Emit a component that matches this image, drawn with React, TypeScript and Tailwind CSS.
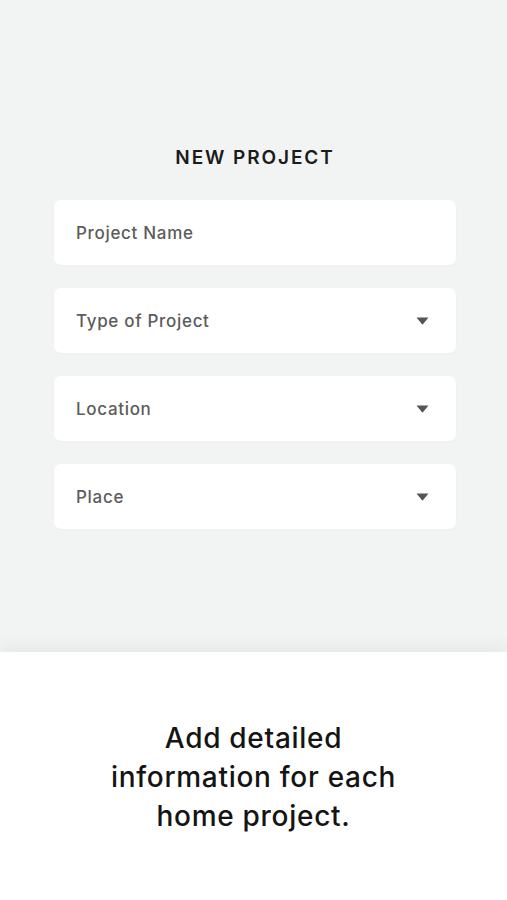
const fields = [
  { label: 'Project Name', select: false },
  { label: 'Type of Project', select: true },
  { label: 'Location', select: true },
  { label: 'Place', select: true },
];

const Caret = () => (
  <svg width="13" height="8" viewBox="0 0 13 8" className="text-[#555555]">
    <path d="M0.5 0.5 H12.5 L7.2 7 Q6.5 7.8 5.8 7 Z" fill="currentColor" />
  </svg>
);

const App = () => {
  return (
    <div
      className="w-full h-[900px] flex flex-col bg-white"
      style={{ fontFamily: 'Inter, "Noto Sans", sans-serif' }}
    >
      <div className="h-[652px] bg-[#f2f4f3] pt-[146px] pl-[54px] pr-[51px] flex flex-col shrink-0">
        <h1 className="text-center text-[19px] leading-[24px] font-semibold tracking-[0.1em] text-[#1b1b1b]">
          NEW PROJECT
        </h1>
        <div className="mt-[30px] flex flex-col gap-[23px]">
          {fields.map((f) => (
            <div
              key={f.label}
              className="h-[65px] bg-white rounded-[7px] flex items-center justify-between pl-[22px] pr-[27px] shadow-[0_1px_2px_rgba(0,0,0,0.03)]"
            >
              <span className="pt-[3px] text-[17px] font-medium text-[#5c5c5c] tracking-[0.04em]">
                {f.label}
              </span>
              {f.select && <Caret />}
            </div>
          ))}
        </div>
      </div>
      <div className="flex-1 bg-white shadow-[0_-8px_14px_rgba(0,0,0,0.045)]">
        <p className="pt-[67px] text-center text-[28px] leading-[39px] font-medium tracking-[0.025em] text-[#141414]">
          Add detailed
          <br />
          information for each
          <br />
          home project.
        </p>
      </div>
    </div>
  );
};

export default App;
